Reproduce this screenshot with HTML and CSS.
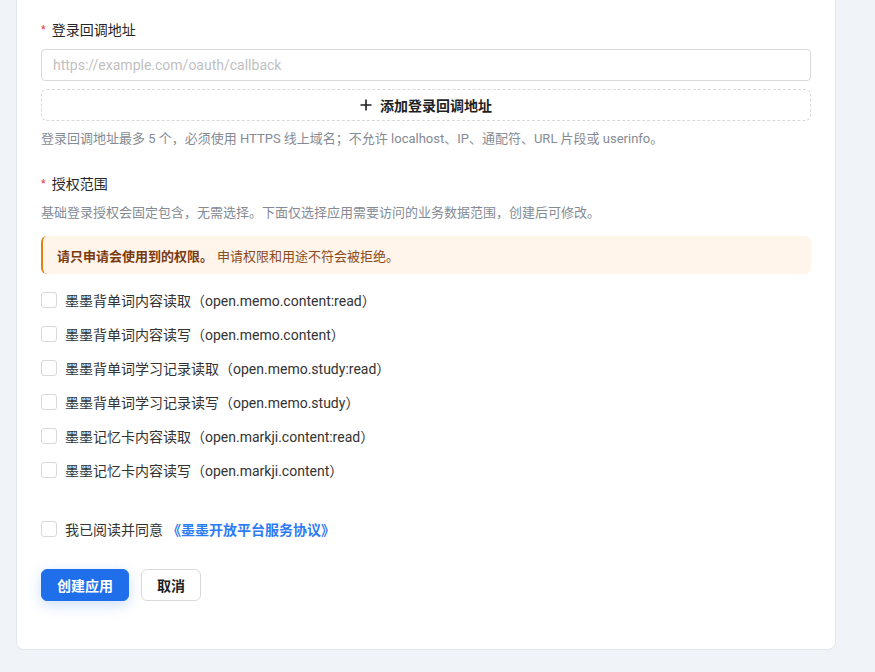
FILE: index.html
```html
<!DOCTYPE html>
<html lang="zh-CN">
<head>
<meta charset="utf-8">
<title>创建应用</title>
<link rel="stylesheet" href="styles.css">
</head>
<body>
<div class="page">
  <div class="card">
    <div class="field">
      <div class="label"><span class="req">*</span>登录回调地址</div>
      <input class="input" type="text" placeholder="https://example.com/oauth/callback">
      <button class="dashed" type="button">
        <svg class="plus" width="12" height="12" viewBox="0 0 12 12"><path d="M6 0.5V11.5M0.5 6H11.5" stroke="#1f1f1f" stroke-width="1.6" fill="none"/></svg>
        <span>添加登录回调地址</span>
      </button>
      <div class="help">登录回调地址最多 5 个，必须使用 HTTPS 线上域名；不允许 localhost、IP、通配符、URL 片段或 userinfo。</div>
    </div>

    <div class="field scope">
      <div class="label"><span class="req">*</span>授权范围</div>
      <div class="help desc">基础登录授权会固定包含，无需选择。下面仅选择应用需要访问的业务数据范围，创建后可修改。</div>
      <div class="alert"><strong>请只申请会使用到的权限。</strong> 申请权限和用途不符会被拒绝。</div>
      <div class="checks">
        <label class="check"><span class="box"></span>墨墨背单词内容读取（open.memo.content:read）</label>
        <label class="check"><span class="box"></span>墨墨背单词内容读写（open.memo.content）</label>
        <label class="check"><span class="box"></span>墨墨背单词学习记录读取（open.memo.study:read）</label>
        <label class="check"><span class="box"></span>墨墨背单词学习记录读写（open.memo.study）</label>
        <label class="check"><span class="box"></span>墨墨记忆卡内容读取（open.markji.content:read）</label>
        <label class="check"><span class="box"></span>墨墨记忆卡内容读写（open.markji.content）</label>
      </div>
    </div>

    <label class="check agree"><span class="box"></span>我已阅读并同意 <a class="link" href="#">《墨墨开放平台服务协议》</a></label>

    <div class="actions">
      <button class="btn primary" type="button">创建应用</button>
      <button class="btn" type="button">取消</button>
    </div>
  </div>
</div>
</body>
</html>
```

FILE: styles.css
```css
* { box-sizing: border-box; }
html, body { margin: 0; padding: 0; }
body {
  background: #f0f3f8;
  font-family: Roboto, "Noto Sans CJK SC", sans-serif;
  color: #262626;
  font-size: 14px;
}
.page {
  padding: 0 40px 0 16px;
  height: 672px;
  overflow: hidden;
}
.card {
  width: 820px;
  background: #fff;
  border: 1px solid #e3e8ef;
  border-top: none;
  border-radius: 0 0 8px 8px;
  padding: 19px 24px 48px 24px;
}
.label {
  font-size: 14px;
  line-height: 22px;
  color: #262626;
  display: flex;
  align-items: center;
}
.req {
  color: #f5222d;
  font-size: 12px;
  margin-right: 6px;
  font-family: "Liberation Sans", sans-serif;
}
.input {
  display: block;
  width: 770px;
  height: 32px;
  margin-top: 8px;
  border: 1px solid #d9d9d9;
  border-radius: 4px;
  padding: 0 11px;
  font: inherit;
  font-size: 14px;
  color: #262626;
  outline: none;
}
.input::placeholder { color: #bfbfbf; }
.dashed {
  display: flex;
  align-items: center;
  justify-content: center;
  gap: 8px;
  width: 770px;
  height: 32px;
  margin-top: 8px;
  border: 1px dashed #d9d9d9;
  border-radius: 6px;
  background: #fff;
  font: inherit;
  font-size: 14px;
  font-weight: 700;
  color: #1f1f1f;
  padding: 0;
}
.plus { display: block; }
.help {
  margin-top: 8px;
  font-size: 13px;
  line-height: 20px;
  color: #858b94;
}
.scope { margin-top: 24px; }
.desc { margin-top: 8px; }
.alert {
  margin-top: 13px;
  height: 38px;
  display: flex;
  align-items: center;
  padding: 0 14px;
  background: #fff5eb;
  border-left: 2px solid #e0820f;
  border-radius: 6px;
  font-size: 13px;
  color: #8a4a1b;
}
.alert strong { color: #7a3a10; font-weight: 700; margin-right: 4px; }
.checks {
  margin-top: 15px;
  display: flex;
  flex-direction: column;
  gap: 12px;
}
.check {
  display: flex;
  align-items: center;
  height: 22px;
  font-size: 14px;
  color: #333;
  cursor: pointer;
}
.box {
  width: 16px;
  height: 16px;
  border: 1px solid #d9d9d9;
  border-radius: 3px;
  background: #fff;
  margin-right: 8px;
  flex: none;
}
.agree { margin-top: 37px; }
.link {
  color: #2f7bf5;
  font-weight: 700;
  text-decoration: none;
  margin-left: 4px;
}
.actions {
  margin-top: 29px;
  display: flex;
  gap: 12px;
}
.btn {
  height: 32px;
  padding: 0 15px;
  border: 1px solid #d9d9d9;
  border-radius: 6px;
  background: #fff;
  font: inherit;
  font-size: 14px;
  font-weight: 700;
  color: #1f1f1f;
}
.btn.primary {
  width: 88px;
  background: #1f6feb;
  border-color: #1f6feb;
  color: #fff;
  box-shadow: 0 4px 14px rgba(31, 111, 235, 0.22);
}
```
